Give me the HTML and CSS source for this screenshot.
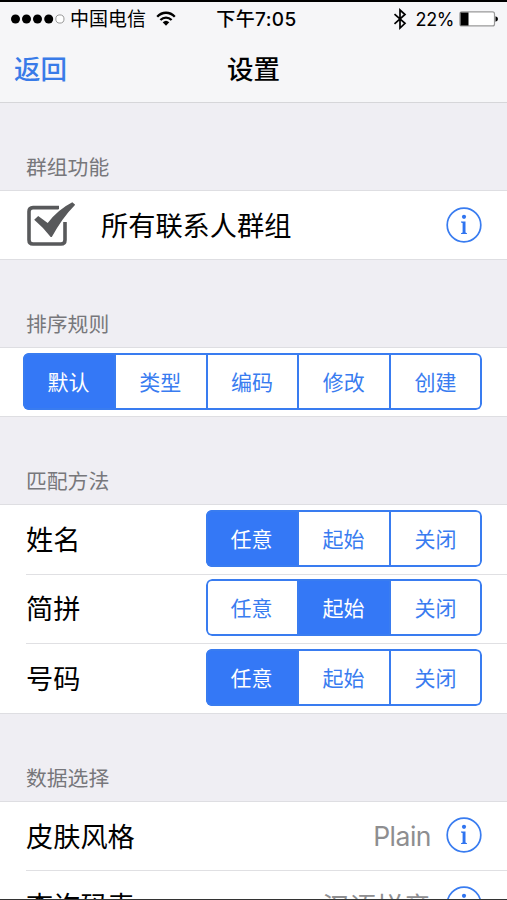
FILE: index.html
```html
<!DOCTYPE html>
<html lang="zh-CN">
<head>
<meta charset="utf-8">
<title>设置</title>
<link rel="stylesheet" href="styles.css">
</head>
<body>
<div class="screen">
  <header class="header">
    <div class="status">
      <div class="carrier">
        <svg class="signal" width="56" height="12" viewBox="0 0 56 12"><circle cx="4.5" cy="6" r="4.5"/><circle cx="15.5" cy="6" r="4.5"/><circle cx="26.5" cy="6" r="4.5"/><circle cx="37.7" cy="6" r="4.5"/><circle class="empty" cx="48.9" cy="6" r="4.1"/></svg>
        <span>中国电信</span>
        <svg class="wifi" width="20" height="16" viewBox="0 0 20 16"><path class="arc" d="M1.2 5.7C6.2.4 13.8.4 18.8 5.7M4.4 9C7.7 5.7 12.3 5.7 15.6 9"/><path d="M6.7 11.2Q10 8.2 13.3 11.2L10 14.8Z"/></svg>
      </div>
      <div class="time">下午7:05</div>
      <div class="power">
        <svg class="bluetooth" width="14" height="22" viewBox="0 0 14 22"><path d="M1.5 6.2 12 15.3 7 20V2l5 4.5L1.5 15.8"/></svg>
        <span>22%</span>
        <svg class="battery" width="40" height="16" viewBox="0 0 40 16"><rect class="case" x=".9" y=".9" width="34.6" height="14" rx="2"/><path d="M1.5 1.5h8v13h-8zM36.5 5.3q2.5.6 2.5 2.7t-2.5 2.7z"/></svg>
      </div>
    </div>
    <nav class="nav"><a class="back">返回</a><h1 class="title">设置</h1></nav>
  </header>

  <section class="group">
    <h2 class="label">群组功能</h2>
    <div class="card">
      <div class="row">
        <svg class="check" width="50" height="46" viewBox="0 0 50 46"><path class="box" d="M33 6.6H7Q3 6.6 3 10.6V39q0 4 4 4h28q4 0 4-4V21"/><path class="tick" d="M8.2 18.7 12.2 15 21.7 21.9Q32 8.5 46.3 1.2L49.2 3.7Q36 17 25.8 36.1H24.7Q17 26 8.2 18.7Z"/></svg>
        <span class="name">所有联系人群组</span>
        <svg class="info" width="36" height="36" viewBox="0 0 36 36"><circle class="ring" cx="18" cy="18" r="16.8"/><circle cx="18" cy="9.8" r="2.1"/><path d="M15 14.5h4.5v11l1.5.8v.8h-6v-.8l1.6-.8V16l-1.6-.6z"/></svg>
      </div>
    </div>
  </section>

  <section class="group">
    <h2 class="label">排序规则</h2>
    <div class="card">
      <div class="row">
        <div class="segments full"><span class="on">默认</span><span>类型</span><span>编码</span><span>修改</span><span>创建</span></div>
      </div>
    </div>
  </section>

  <section class="group">
    <h2 class="label">匹配方法</h2>
    <div class="card">
      <div class="row"><span class="name">姓名</span><div class="segments"><span class="on">任意</span><span>起始</span><span>关闭</span></div></div>
      <div class="row"><span class="name">简拼</span><div class="segments"><span>任意</span><span class="on">起始</span><span>关闭</span></div></div>
      <div class="row"><span class="name">号码</span><div class="segments"><span class="on">任意</span><span>起始</span><span>关闭</span></div></div>
    </div>
  </section>

  <section class="group">
    <h2 class="label">数据选择</h2>
    <div class="card">
      <div class="row"><span class="name">皮肤风格</span><span class="value">Plain</span>
        <svg class="info" width="36" height="36" viewBox="0 0 36 36"><circle class="ring" cx="18" cy="18" r="16.8"/><circle cx="18" cy="9.8" r="2.1"/><path d="M15 14.5h4.5v11l1.5.8v.8h-6v-.8l1.6-.8V16l-1.6-.6z"/></svg>
      </div>
      <div class="row"><span class="name">查询码表</span><span class="value wide">汉语拼音</span>
        <svg class="info" width="36" height="36" viewBox="0 0 36 36"><circle class="ring" cx="18" cy="18" r="16.8"/><circle cx="18" cy="9.8" r="2.1"/><path d="M15 14.5h4.5v11l1.5.8v.8h-6v-.8l1.6-.8V16l-1.6-.6z"/></svg>
      </div>
    </div>
  </section>
</div>
</body>
</html>
```
FILE: styles.css
```css
* { box-sizing: border-box; }
body { margin: 0; overflow: hidden; }
.screen {
  width: 507px;
  height: 900px;
  overflow: hidden;
  border-top: 2px solid #000;
  border-bottom: 1px solid #333;
  background: #efeef3;
  color: #000;
  font-family: Inter, "Noto Sans CJK SC", sans-serif;
}
svg { display: block; flex: none; }
.header {
  height: 101px;
  background: #f6f6f8;
  border-bottom: 1px solid #d6d6d9;
}
.status {
  display: grid;
  grid-template-columns: 1fr auto 1fr;
  align-items: center;
  height: 32px;
  padding: 0 8px 0 11px;
  font-size: 19px;
  line-height: 32px;
}
.carrier, .power { display: flex; align-items: center; }
.carrier span { padding-top: 2px; }
.time { padding: 1px 0 0 3px; font-weight: 500; letter-spacing: .4px; }
.signal { margin-right: 3px; }
.empty { fill: #fff; stroke: #999; stroke-width: 1; }
.wifi { margin-left: 10px; }
.arc { fill: none; stroke: #000; stroke-width: 2.3; }
.power { justify-content: flex-end; font-size: 18px; letter-spacing: -.4px; }
.power span { padding-top: 1px; }
.bluetooth { margin-right: 9px; fill: none; stroke: #000; stroke-width: 1.7; }
.battery { margin-left: 5px; }
.case { fill: #fff; stroke: #999; stroke-width: 1.2; }
.nav {
  display: grid;
  grid-template-columns: 1fr auto 1fr;
  padding: 0 14px;
  font-size: 26.5px;
  line-height: 70px;
}
.back { color: #397be8; font-weight: 500; }
.title { margin: 0; font-size: 26.5px; font-weight: 500; }
.label {
  height: 87px;
  margin: 0;
  padding: 49px 26px 0;
  color: #77777b;
  font-size: 20.8px;
  font-weight: 400;
  line-height: 31px;
}
.card {
  height: 70px;
  border-top: 1px solid #dedee2;
  border-bottom: 1px solid #dedee2;
  background: #fff;
}
.group:nth-of-type(3) .card { height: 209.5px; }
.group:nth-of-type(4) .card { height: 150px; }
.row {
  display: flex;
  align-items: center;
  height: 69.5px;
  margin-left: 26px;
  padding: 0 25px 2px 0;
}
.card .row:first-child:not(:last-child) { height: 68.5px; padding-bottom: 1px; }
.row + .row { border-top: 1px solid #e0e0e3; }
.name { padding-top: 5px; font-size: 27.2px; line-height: 40px; }
.check { margin: 0 25px 2px 0; }
.box { fill: none; stroke: #58595b; stroke-width: 3.6; }
.tick { fill: #58595b; stroke: #fff; stroke-width: 3; paint-order: stroke; }
.info { margin-left: auto; fill: #2f74f0; }
.ring { fill: none; stroke: #397cf0; stroke-width: 1.7; }
.value { margin-left: auto; padding-top: 1px; color: #8e8e90; font-size: 26.5px; letter-spacing: -.5px; }
.value.wide { font-size: 27.2px; letter-spacing: 0; }
.value + .info { margin-left: 15px; }
.segments {
  position: relative;
  display: grid;
  grid-template-columns: repeat(3, 1fr);
  width: 276px;
  height: 57px;
  margin-left: auto;
  overflow: hidden;
  border-radius: 6px;
  color: #397cf0;
  font-size: 21px;
  line-height: 59px;
  text-align: center;
}
.segments::after {
  content: "";
  position: absolute;
  inset: 0;
  border: 2px solid #397cf0;
  border-radius: 6px;
}
.segments.full {
  grid-template-columns: repeat(5, 1fr);
  width: 459px;
  margin-left: -3px;
}
.segments span { padding-right: 1px; }
.segments span + span { box-shadow: -1px 0 #397cf0, inset 1px 0 #397cf0; }
.segments .on { background: #3478f6; color: #fff; }
```
